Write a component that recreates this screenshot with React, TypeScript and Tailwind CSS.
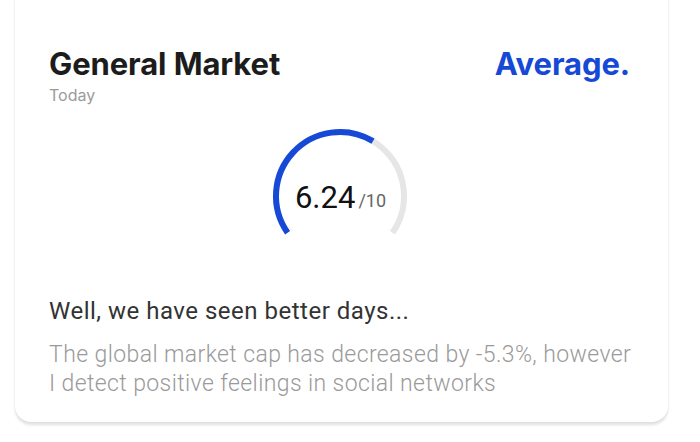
export default function App() {
  return (
    <div className="w-[700px] h-[442px] bg-white overflow-hidden">
      <div className="-mt-4 ml-[15px] w-[653px] rounded-2xl bg-white shadow-[0_3px_3px_rgba(0,0,0,0.12),0_0_1px_rgba(0,0,0,0.08)] pt-[62px] pb-[24px] pl-[34px] pr-[38px]">
        {/* header */}
        <div className="flex items-start justify-between">
          <div>
            <h1 className="font-['Inter',sans-serif] text-[31px] leading-[36px] font-bold text-[#1c1c1c] tracking-[-0.1px]">
              General Market
            </h1>
            <p className="mt-[3px] font-['Inter',sans-serif] text-[16px] leading-[20px] text-[#9b9b9b]">Today</p>
          </div>
          <span className="font-['Inter',sans-serif] text-[31px] leading-[36px] font-bold text-[#1549d6] tracking-[-0.1px]">
            Average.
          </span>
        </div>

        {/* gauge */}
        <div className="relative mx-auto mt-[21px] w-[140px] h-[140px]">
          <svg width="140" height="140" viewBox="0 0 140 140">
            <path
              d="M17.57 106.71 A64 64 0 1 1 122.43 106.71"
              fill="none"
              stroke="#e6e6e6"
              strokeWidth="6"
            />
            <path
              d="M17.57 106.71 A64 64 0 0 1 102.96 15.14"
              fill="none"
              stroke="#1549d6"
              strokeWidth="6"
            />
          </svg>
          <div className="absolute inset-0 flex items-center justify-center pt-[2px] pl-[2px] font-['Roboto',sans-serif]">
            <span className="text-[31px] leading-none text-[#111]">6.24</span>
            <span className="ml-[3px] mt-[8px] text-[18px] leading-none text-[#666]">/10</span>
          </div>
        </div>

        {/* summary */}
        <h2 className="mt-[30px] whitespace-nowrap font-['Roboto',sans-serif] text-[24px] leading-[30px] tracking-[0.5px] text-[#333]">
          Well, we have seen better days...
        </h2>
        <p className="mt-[14px] whitespace-nowrap font-['Roboto',sans-serif] font-light text-[23px] leading-[29px] tracking-[0.4px] text-[#9a9a9a]">
          The global market cap has decreased by -5.3%, however
          <br />I detect positive feelings in social networks
        </p>
      </div>
    </div>
  );
}
